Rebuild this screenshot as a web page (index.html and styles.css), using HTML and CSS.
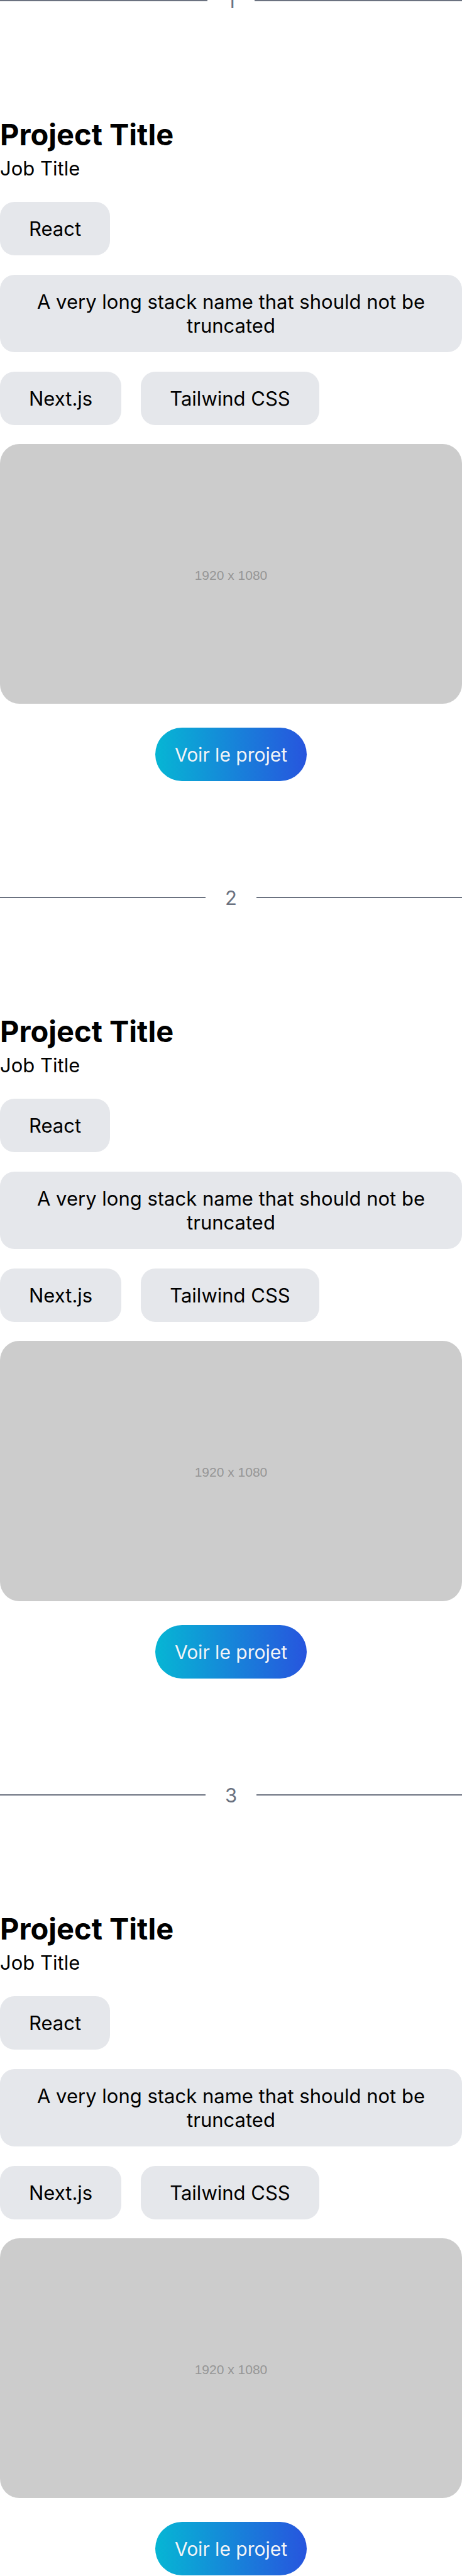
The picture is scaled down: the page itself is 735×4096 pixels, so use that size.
FILE: index.html
```html
<!DOCTYPE html>
<html lang="fr">
<head>
<meta charset="utf-8">
<meta name="viewport" content="width=device-width, initial-scale=1">
<title>Projets</title>
<link rel="stylesheet" href="styles.css">
</head>
<body>
<main class="projects">
  <section class="project">
    <div class="divider"><span class="divider-number">1</span></div>
    <header class="project-header">
      <h2 class="project-title">Project Title</h2>
      <p class="project-job">Job Title</p>
    </header>
    <ul class="stack">
      <li class="chip">React</li>
      <li class="chip">A very long stack name that should not be truncated</li>
      <li class="chip">Next.js</li>
      <li class="chip">Tailwind CSS</li>
    </ul>
    <div class="preview">1920 x 1080</div>
    <a class="project-link" href="#">Voir le projet</a>
  </section>
  <section class="project">
    <div class="divider"><span class="divider-number">2</span></div>
    <header class="project-header">
      <h2 class="project-title">Project Title</h2>
      <p class="project-job">Job Title</p>
    </header>
    <ul class="stack">
      <li class="chip">React</li>
      <li class="chip">A very long stack name that should not be truncated</li>
      <li class="chip">Next.js</li>
      <li class="chip">Tailwind CSS</li>
    </ul>
    <div class="preview">1920 x 1080</div>
    <a class="project-link" href="#">Voir le projet</a>
  </section>
  <section class="project">
    <div class="divider"><span class="divider-number">3</span></div>
    <header class="project-header">
      <h2 class="project-title">Project Title</h2>
      <p class="project-job">Job Title</p>
    </header>
    <ul class="stack">
      <li class="chip">React</li>
      <li class="chip">A very long stack name that should not be truncated</li>
      <li class="chip">Next.js</li>
      <li class="chip">Tailwind CSS</li>
    </ul>
    <div class="preview">1920 x 1080</div>
    <a class="project-link" href="#">Voir le projet</a>
  </section>
</main>
</body>
</html>
```
FILE: styles.css
```css
* {
  box-sizing: border-box;
}

body {
  margin: 0;
  background: #fff;
  color: #000;
  font-family: Inter, "Liberation Sans", sans-serif;
  font-size: 31px;
  font-weight: 400;
  line-height: 38px;
}

h2,
p,
ul {
  margin: 0;
  padding: 0;
}

/* The first rule sits flush with the top edge of the page. */
.projects {
  display: flex;
  flex-direction: column;
  gap: 165px;
  margin-top: -19px;
}

.project {
  display: flex;
  flex-direction: column;
}

.divider {
  display: flex;
  align-items: center;
  gap: 31px;
  color: #6b7280;
}

.divider::before,
.divider::after {
  content: "";
  flex: 1;
  height: 2px;
  background: #6b7280;
}

.divider-number {
  padding-top: 2px;
}

.project-header {
  display: flex;
  flex-direction: column;
  gap: 6px;
  margin: 164px 0 34px;
}

.project-title {
  font-size: 47px;
  line-height: 58px;
  font-weight: 700;
}

.stack {
  display: flex;
  flex-wrap: wrap;
  gap: 31px;
  list-style: none;
}

.chip {
  padding: 24px 46px 23px;
  border-radius: 23px;
  background: #e5e7eb;
  text-align: center;
}

.preview {
  display: flex;
  align-items: center;
  justify-content: center;
  aspect-ratio: 16 / 9;
  margin: 30px 0 38px;
  padding-top: 4px;
  border-radius: 31px;
  background: #ccc;
  color: #969696;
  font-family: "Liberation Sans", Arial, sans-serif;
  font-size: 21px;
}

.project-link {
  align-self: center;
  padding: 24px 31px 23px;
  border-radius: 43px;
  background: linear-gradient(to right, #06b6d4, #2755de);
  color: #f3f4f6;
  font-size: 30px;
  text-decoration: none;
}
```
